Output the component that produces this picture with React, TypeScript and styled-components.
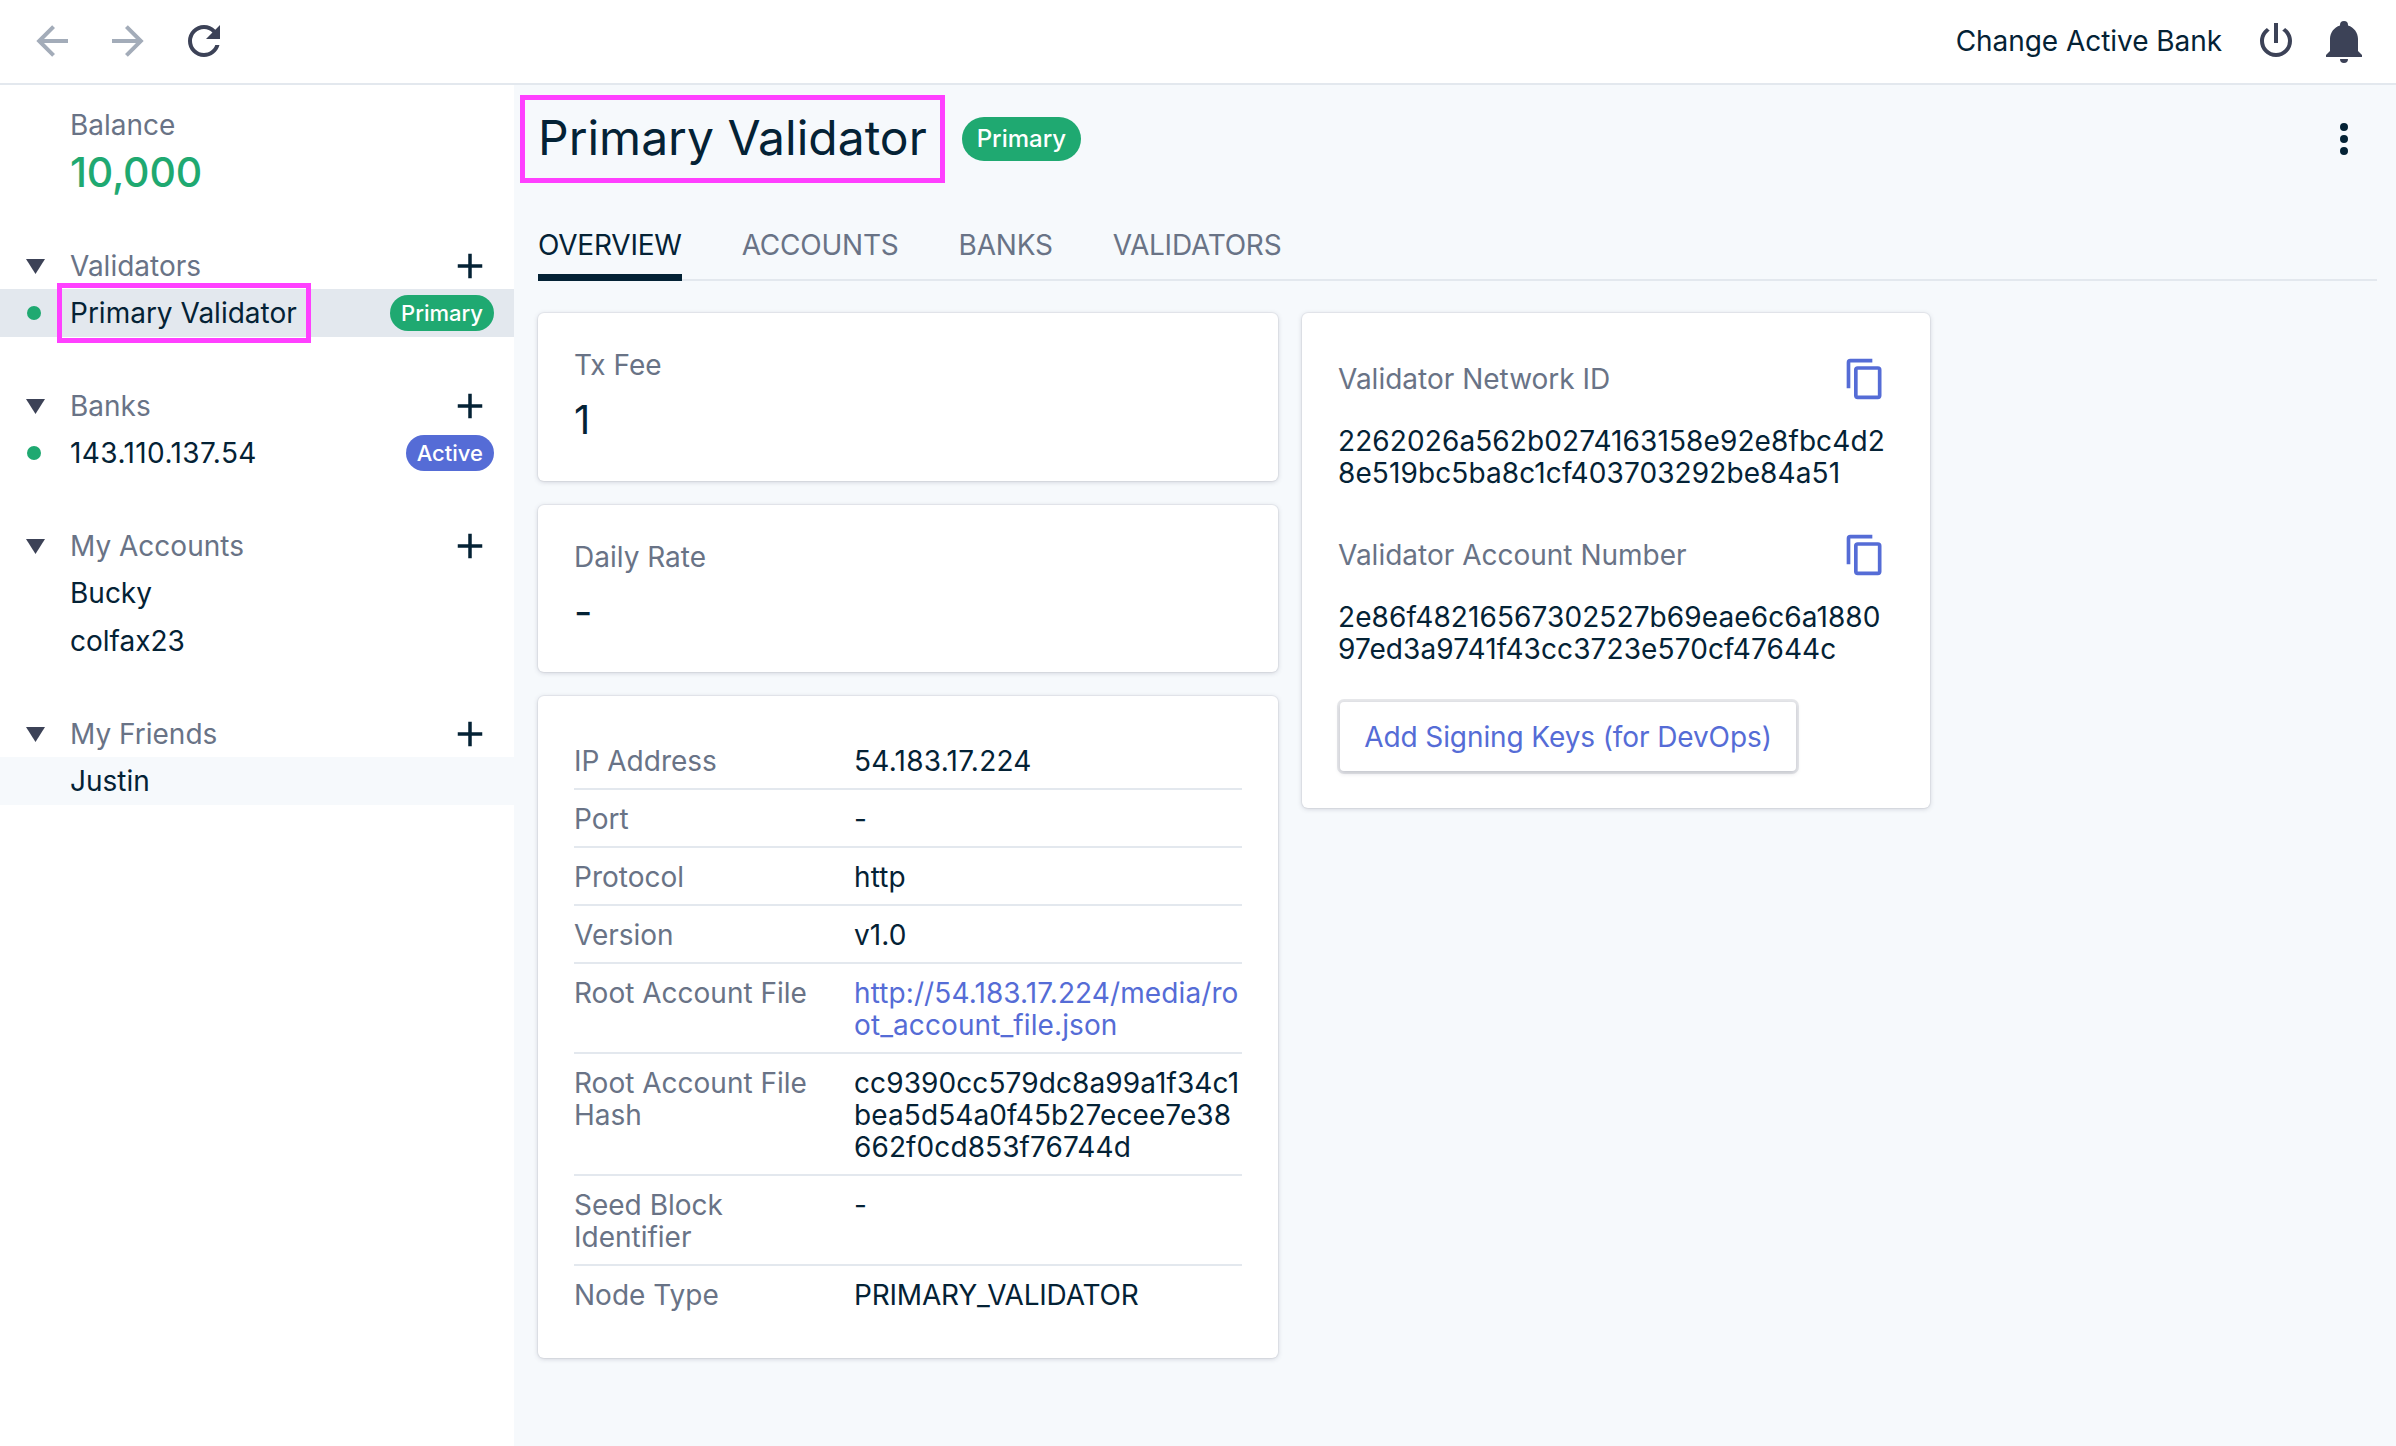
import React from 'react';
import styled, { createGlobalStyle } from 'styled-components';

const Global = createGlobalStyle`
  html, body { margin: 0; padding: 0; background: #fff; }
  body { font-family: Inter, "Liberation Sans", sans-serif; color: #042235; font-size: 28px; line-height: 32px; }
  * { box-sizing: border-box; }
`;

const DARK = '#042235';
const GRAY = '#697386';
const GREEN = '#1fa971';
const BLUE = '#556cd6';
const LINE = '#e3e8ee';
const PALE = '#f6f9fc';

const P = {
  left: 'M20,11V13H8L13.5,18.5L12.08,19.92L4.16,12L12.08,4.08L13.5,5.5L8,11H20Z',
  right: 'M4,11V13H16L10.5,18.5L11.92,19.92L19.84,12L11.92,4.08L10.5,5.5L16,11H4Z',
  refresh: 'M17.65,6.35C16.2,4.9 14.21,4 12,4A8,8 0 0,0 4,12A8,8 0 0,0 12,20C15.73,20 18.84,17.45 19.73,14H17.65C16.83,16.33 14.61,18 12,18A6,6 0 0,1 6,12A6,6 0 0,1 12,6C13.66,6 15.14,6.69 16.22,7.78L13,11H20V4L17.65,6.35Z',
  power: 'M16.56,5.44L15.11,6.89C16.84,7.94 18,9.83 18,12A6,6 0 0,1 12,18A6,6 0 0,1 6,12C6,9.83 7.16,7.94 8.88,6.88L7.44,5.44C5.36,6.88 4,9.28 4,12A8,8 0 0,0 12,20A8,8 0 0,0 20,12C20,9.28 18.64,6.88 16.56,5.44M13,3H11V13H13',
  bell: 'M21,19V20H3V19L5,17V11C5,7.9 7.03,5.17 10,4.29C10,4.19 10,4.1 10,4A2,2 0 0,1 12,2A2,2 0 0,1 14,4C14,4.1 14,4.19 14,4.29C16.97,5.17 19,7.9 19,11V17L21,19M14,21A2,2 0 0,1 12,23A2,2 0 0,1 10,21',
  dots: 'M12,16A2,2 0 0,1 14,18A2,2 0 0,1 12,20A2,2 0 0,1 10,18A2,2 0 0,1 12,16M12,10A2,2 0 0,1 14,12A2,2 0 0,1 12,14A2,2 0 0,1 10,12A2,2 0 0,1 12,10M12,4A2,2 0 0,1 14,6A2,2 0 0,1 12,8A2,2 0 0,1 10,6A2,2 0 0,1 12,4Z',
  copy: 'M19,21H8V7H19M19,5H8A2,2 0 0,0 6,7V21A2,2 0 0,0 8,23H19A2,2 0 0,0 21,21V7A2,2 0 0,0 19,5M16,1H4A2,2 0 0,0 2,3V17H4V3H16V1Z',
  plus: 'M19,13H13V19H11V13H5V11H11V5H13V11H19V13Z',
};

const Svg = styled.svg<{ $size: number; $color: string }>`
  width: ${(p) => p.$size}px;
  height: ${(p) => p.$size}px;
  fill: ${(p) => p.$color};
  flex: none;
  display: block;
`;

const Icon = ({ d, size = 48, color = '#3c4257' }: { d: string; size?: number; color?: string }) => (
  <Svg viewBox="0 0 24 24" $size={size} $color={color}>
    <path d={d} />
  </Svg>
);

const Page = styled.div`
  width: 2396px;
  height: 1446px;
  display: flex;
  flex-direction: column;
  overflow: hidden;
`;

const TopBar = styled.header`
  height: 85px;
  flex: none;
  border-bottom: 2px solid ${LINE};
  padding: 0 28px 1px;
  display: flex;
  align-items: center;
  justify-content: space-between;
`;

const NavGroup = styled.div`
  display: flex;
  align-items: center;
  gap: 28px;
`;

const ActionGroup = styled.div`
  display: flex;
  align-items: center;
  gap: 20px;
`;

const ChangeBank = styled.span`
  margin-right: 10px;
  color: ${DARK};
  letter-spacing: -0.05px;
`;

const Body = styled.div`
  flex: 1;
  display: flex;
  min-height: 0;
`;

const Sidebar = styled.aside`
  width: 514px;
  flex: none;
  background: #fff;
`;

const BalanceBlock = styled.div`
  padding: 24px 0 0 70px;
  height: 160px;
`;

const BalanceLabel = styled.div`
  color: ${GRAY};
`;

const BalanceValue = styled.div`
  color: ${GREEN};
  font-size: 41px;
  line-height: 50px;
  font-weight: 500;
  letter-spacing: -0.2px;
  margin-top: 6px;
`;

const Section = styled.section`
  margin-bottom: 48px;
`;

const SectionHeader = styled.div`
  height: 44px;
  display: flex;
  align-items: center;
  padding: 0 23px 2px 26px;
`;

const Caret = styled.svg`
  width: 19px;
  height: 15px;
  fill: #3c4257;
  flex: none;
  margin-right: 25px;
`;

const SectionTitle = styled.span`
  flex: 1;
  color: ${GRAY};
`;

const Row = styled.div<{ $bg?: string }>`
  height: 48px;
  display: flex;
  align-items: center;
  background: ${(p) => p.$bg || 'transparent'};
  padding-right: 20px;
`;

const DotCell = styled.div`
  width: 70px;
  flex: none;
  padding-left: 27px;
`;

const Dot = styled.div`
  width: 14px;
  height: 14px;
  border-radius: 50%;
  background: ${GREEN};
`;

const RowName = styled.span<{ $spacing?: number }>`
  flex: 1;
  color: ${DARK};
  letter-spacing: ${(p) => p.$spacing || 0}px;
`;

const SidebarHighlight = styled.span`
  border: 5px solid #ff40ff;
  height: 60px;
  margin: -6px 0 -6px -13px;
  padding: 0 9px 0 8px;
  display: flex;
  align-items: center;
  color: ${DARK};
`;

const Spacer = styled.div`
  flex: 1;
`;

const Badge = styled.span<{ $bg: string; $large?: boolean }>`
  background: ${(p) => p.$bg};
  color: #fff;
  border-radius: 22px;
  height: ${(p) => (p.$large ? 44 : 36)}px;
  padding: 0 ${(p) => (p.$large ? 15 : 11)}px;
  display: inline-flex;
  align-items: center;
  font-size: ${(p) => (p.$large ? 24 : 22)}px;
  font-weight: 500;
`;

const Main = styled.main`
  flex: 1;
  background: ${PALE};
  padding: 10px 19px 0 24px;
  min-width: 0;
`;

const TitleRow = styled.div`
  display: flex;
  align-items: center;
  height: 88px;
`;

const TitleBox = styled.h1`
  margin: 0 0 0 -18px;
  height: 88px;
  border: 5px solid #ff40ff;
  padding: 0 13px 2px;
  display: flex;
  align-items: center;
  font-size: 48px;
  line-height: 56px;
  font-weight: 400;
  color: ${DARK};
`;

const TitleBadgeWrap = styled.div`
  margin-left: 17px;
  flex: 1;
  display: flex;
  align-items: center;
  justify-content: space-between;
  padding-right: 9px;
`;

const TabBar = styled.nav`
  margin-top: 15px;
  height: 83px;
  border-bottom: 2px solid ${LINE};
  display: flex;
  gap: 60px;
`;

const Tab = styled.div<{ $active?: boolean }>`
  height: 83px;
  padding-top: 31px;
  color: ${(p) => (p.$active ? DARK : GRAY)};
  border-bottom: 7px solid ${(p) => (p.$active ? DARK : 'transparent')};
  border-radius: 6px 6px 0 0;
  margin-bottom: -2px;
  letter-spacing: -0.22px;
`;

const Columns = styled.div`
  margin-top: 32px;
  display: flex;
  align-items: flex-start;
  gap: 24px;
`;

const LeftCol = styled.div`
  width: 740px;
  display: flex;
  flex-direction: column;
  gap: 24px;
`;

const Card = styled.div`
  background: #fff;
  border-radius: 6px;
  box-shadow: 0 0 0 1px rgba(60, 66, 87, 0.05), 0 1px 5px rgba(60, 66, 87, 0.22);
`;

const StatCard = styled(Card)`
  height: 167.5px;
  padding: 36px;
`;

const StatLabel = styled.div`
  color: ${GRAY};
`;

const StatValue = styled.div`
  font-size: 40px;
  line-height: 44px;
  margin-top: 17px;
  color: ${DARK};
`;

const TableCard = styled(Card)`
  padding: 36px 36px 34px;
`;

const TableRow = styled.div<{ $last?: boolean }>`
  display: grid;
  grid-template-columns: 280px 388px;
  padding: 12.8px 0 11.2px;
  border-bottom: 2px solid ${(p) => (p.$last ? 'transparent' : LINE)};
`;

const RowLabel = styled.div`
  color: ${GRAY};
  padding-right: 20px;
`;

const RowValue = styled.div<{ $spacing?: number }>`
  color: ${DARK};
  word-break: break-all;
  letter-spacing: ${(p) => p.$spacing ?? 0.1}px;
`;

const RowLink = styled.a`
  color: ${BLUE};
  text-decoration: none;
  word-break: break-all;
  letter-spacing: 0.1px;
`;

const InfoCard = styled(Card)`
  width: 628px;
  padding: 44px 36px 37px;
`;

const InfoHead = styled.div`
  display: flex;
  align-items: center;
  justify-content: space-between;
  padding-right: 7px;
`;

const InfoLabel = styled.span`
  color: ${GRAY};
`;

const InfoValue = styled.div`
  margin: 24px 6px 44px 0;
  color: ${DARK};
  word-break: break-all;
  letter-spacing: 0.1px;
`;

const SigningButton = styled.button`
  width: 456px;
  height: 69px;
  margin: -7px 0 0 2px;
  padding: 0;
  display: block;
  font: inherit;
  letter-spacing: -0.1px;
  color: ${BLUE};
  background: #fff;
  border: 0;
  border-radius: 4px;
  box-shadow: 0 0 0 3px rgba(60, 66, 87, 0.12), 0 2px 5px rgba(60, 66, 87, 0.22);
`;

const Triangle = () => (
  <Caret viewBox="0 0 19 15">
    <polygon points="0,0 19,0 9.5,15" />
  </Caret>
);

const SideHead = ({ title }: { title: string }) => (
  <SectionHeader>
    <Triangle />
    <SectionTitle>{title}</SectionTitle>
    <Icon d={P.plus} size={42} color={DARK} />
  </SectionHeader>
);

const rows: { label: string; value: string; link?: boolean; spacing?: number }[] = [
  { label: 'IP Address', value: '54.183.17.224', spacing: 0.25 },
  { label: 'Port', value: '-' },
  { label: 'Protocol', value: 'http' },
  { label: 'Version', value: 'v1.0' },
  { label: 'Root Account File', value: 'http://54.183.17.224/media/root_account_file.json', link: true },
  { label: 'Root Account File Hash', value: 'cc9390cc579dc8a99a1f34c1bea5d54a0f45b27ecee7e38662f0cd853f76744d' },
  { label: 'Seed Block Identifier', value: '-' },
  { label: 'Node Type', value: 'PRIMARY_VALIDATOR', spacing: -0.2 },
];

export default function App() {
  return (
    <Page>
      <Global />
      <TopBar>
        <NavGroup>
          <Icon d={P.left} color="#a3acb9" />
          <Icon d={P.right} color="#a3acb9" />
          <Icon d={P.refresh} />
        </NavGroup>
        <ActionGroup>
          <ChangeBank>Change Active Bank</ChangeBank>
          <Icon d={P.power} />
          <Icon d={P.bell} />
        </ActionGroup>
      </TopBar>
      <Body>
        <Sidebar>
          <BalanceBlock>
            <BalanceLabel>Balance</BalanceLabel>
            <BalanceValue>10,000</BalanceValue>
          </BalanceBlock>
          <Section>
            <SideHead title="Validators" />
            <Row $bg={LINE}>
              <DotCell><Dot /></DotCell>
              <SidebarHighlight>Primary Validator</SidebarHighlight>
              <Spacer />
              <Badge $bg={GREEN}>Primary</Badge>
            </Row>
          </Section>
          <Section>
            <SideHead title="Banks" />
            <Row>
              <DotCell><Dot /></DotCell>
              <RowName $spacing={0.42}>143.110.137.54</RowName>
              <Badge $bg={BLUE}>Active</Badge>
            </Row>
          </Section>
          <Section>
            <SideHead title="My Accounts" />
            <Row><DotCell /><RowName>Bucky</RowName></Row>
            <Row><DotCell /><RowName>colfax23</RowName></Row>
          </Section>
          <Section>
            <SideHead title="My Friends" />
            <Row $bg={PALE}><DotCell /><RowName>Justin</RowName></Row>
          </Section>
        </Sidebar>
        <Main>
          <TitleRow>
            <TitleBox>Primary Validator</TitleBox>
            <TitleBadgeWrap>
              <Badge $bg={GREEN} $large>Primary</Badge>
              <Icon d={P.dots} color={DARK} />
            </TitleBadgeWrap>
          </TitleRow>
          <TabBar>
            <Tab $active>OVERVIEW</Tab>
            <Tab>ACCOUNTS</Tab>
            <Tab>BANKS</Tab>
            <Tab>VALIDATORS</Tab>
          </TabBar>
          <Columns>
            <LeftCol>
              <StatCard>
                <StatLabel>Tx Fee</StatLabel>
                <StatValue>1</StatValue>
              </StatCard>
              <StatCard>
                <StatLabel>Daily Rate</StatLabel>
                <StatValue>-</StatValue>
              </StatCard>
              <TableCard>
                {rows.map((r, i) => (
                  <TableRow key={r.label + i} $last={i === rows.length - 1}>
                    <RowLabel>{r.label}</RowLabel>
                    {r.link ? <div><RowLink href="#">{r.value}</RowLink></div> : <RowValue $spacing={r.spacing}>{r.value}</RowValue>}
                  </TableRow>
                ))}
              </TableCard>
            </LeftCol>
            <InfoCard>
              <InfoHead>
                <InfoLabel>Validator Network ID</InfoLabel>
                <Icon d={P.copy} size={44} color={BLUE} />
              </InfoHead>
              <InfoValue>2262026a562b0274163158e92e8fbc4d28e519bc5ba8c1cf403703292be84a51</InfoValue>
              <InfoHead>
                <InfoLabel>Validator Account Number</InfoLabel>
                <Icon d={P.copy} size={44} color={BLUE} />
              </InfoHead>
              <InfoValue>2e86f48216567302527b69eae6c6a188097ed3a9741f43cc3723e570cf47644c</InfoValue>
              <SigningButton>Add Signing Keys (for DevOps)</SigningButton>
            </InfoCard>
          </Columns>
        </Main>
      </Body>
    </Page>
  );
}
